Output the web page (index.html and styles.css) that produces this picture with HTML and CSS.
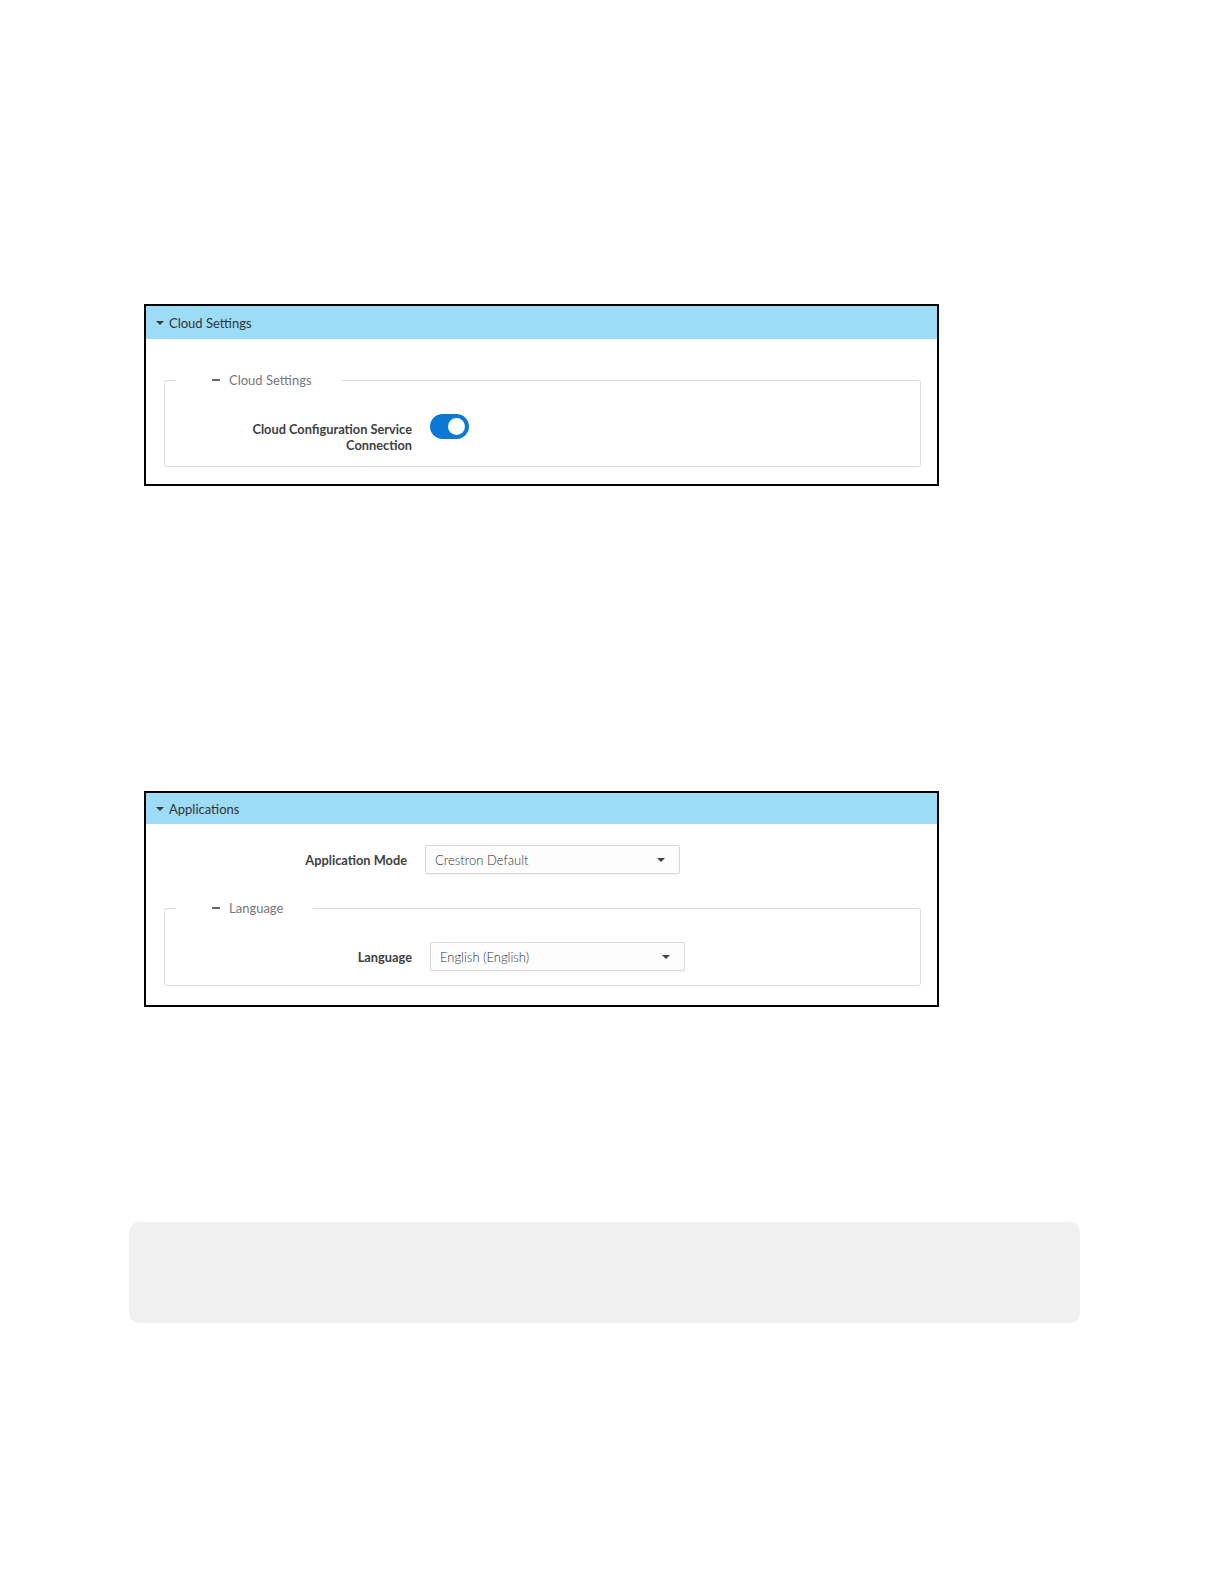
FILE: index.html
```html
<!DOCTYPE html>
<html lang="en">
<head>
  <meta charset="UTF-8" />
  <meta name="viewport" content="width=device-width, initial-scale=1.0"/>
  <title>Cloud Settings and Applications</title>
  <link rel="stylesheet" href="styles.css">
</head>
<body>

<div class="page">

  <div class="panel" id="cloud-panel">
    <div class="panel-header">
      <span class="caret"></span>
      <span>Cloud Settings</span>
    </div>
    <div class="panel-body">
      <fieldset class="group">
        <legend><span class="dash"></span>Cloud Settings</legend>
        <div class="row row-toggle">
          <label class="field-label wide">Cloud Configuration Service<br>Connection</label>
          <div class="toggle on"><span class="knob"></span></div>
        </div>
      </fieldset>
    </div>
  </div>

  <div class="panel" id="apps-panel">
    <div class="panel-header short">
      <span class="caret"></span>
      <span>Applications</span>
    </div>
    <div class="panel-body apps-body">
      <div class="row">
        <label class="field-label">Application Mode</label>
        <div class="select">
          <span>Crestron Default</span>
          <span class="arrow"></span>
        </div>
      </div>
      <fieldset class="group lang-group">
        <legend><span class="dash"></span>Language</legend>
        <div class="row">
          <label class="field-label wide">Language</label>
          <div class="select">
            <span>English (English)</span>
            <span class="arrow"></span>
          </div>
        </div>
      </fieldset>
    </div>
  </div>

  <div class="note"></div>

</div>

</body>
</html>
```

FILE: styles.css
```css
body {
  font-family: 'Lato', 'Open Sans', sans-serif;
  margin: 0;
  padding: 0;
  background: #fff;
  color: #333;
}

.page {
  padding: 304px 0 262px 0;
}

.panel {
  width: 795px;
  margin-left: 144px;
  border: 2px solid #000;
  box-sizing: border-box;
  background: #fff;
}

#apps-panel {
  margin-top: 305px;
}

.panel-header {
  background-color: #9ddcf6;
  height: 33px;
  display: flex;
  align-items: center;
  padding-left: 10px;
  font-size: 13px;
  color: #333;
}

.panel-header.short {
  height: 31px;
}

.caret {
  width: 0;
  height: 0;
  border-left: 4px solid transparent;
  border-right: 4px solid transparent;
  border-top: 4px solid #3a3a3a;
  margin-right: 5px;
  margin-top: 1px;
}

.panel-body {
  padding: 33px 16px 17px 18px;
}

.apps-body {
  padding-top: 21px;
  padding-bottom: 19px;
}

.group {
  border: 1px solid #dcdcdc;
  border-radius: 3px;
  margin: 0;
  padding: 26px 0 13px 0;
}

.group legend {
  margin-left: 11px;
  padding: 0 30px 0 36px;
  font-size: 13px;
  color: #777;
  display: flex;
  align-items: center;
}

.dash {
  display: inline-block;
  width: 8px;
  height: 2px;
  background: #666;
  margin-right: 9px;
}

.row {
  display: flex;
  align-items: center;
  gap: 18px;
}

.row-toggle {
  align-items: flex-start;
}

.field-label {
  width: 243px;
  text-align: right;
  font-size: 12.8px;
  font-weight: bold;
  line-height: 16px;
  color: #404040;
}

.field-label.wide {
  width: 247px;
}

.row-toggle .field-label {
  margin-top: 7px;
}

.lang-group {
  margin-top: 26px;
  padding-top: 26px;
  padding-bottom: 14px;
}

.select {
  width: 255px;
  height: 29px;
  box-sizing: border-box;
  border: 1px solid #d9d9d9;
  border-radius: 2px;
  background: #fdfdfd;
  display: flex;
  align-items: center;
  justify-content: space-between;
  padding: 0 14px 0 9px;
  font-size: 13px;
  font-weight: 300;
  color: #333;
  box-shadow: 0 1px 1px rgba(0,0,0,0.04);
}

.arrow {
  width: 0;
  height: 0;
  border-left: 4px solid transparent;
  border-right: 4px solid transparent;
  border-top: 4px solid #444;
}

.toggle {
  width: 39px;
  height: 25px;
  border-radius: 13px;
  background: #0c78d6;
  position: relative;
}

.toggle .knob {
  position: absolute;
  top: 4px;
  right: 4px;
  width: 17px;
  height: 17px;
  border-radius: 50%;
  background: #fff;
}

.note {
  margin: 215px 0 0 129px;
  width: 951px;
  height: 101px;
  background: #f0f0f0;
  border-radius: 10px;
}
```
